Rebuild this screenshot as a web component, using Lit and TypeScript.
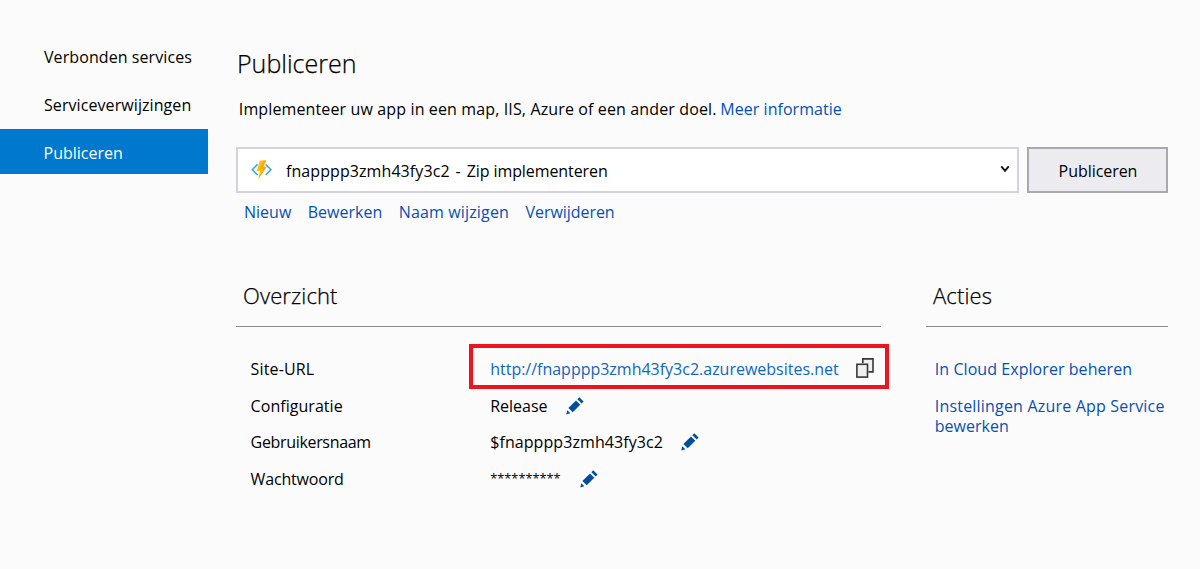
import { LitElement, html, css } from "lit";
import { customElement } from "lit/decorators.js";

const pencil = html`<svg class="pencil" width="18" height="18" viewBox="0 0 18 18" aria-hidden="true">
  <g fill="#004e9c">
    <path d="M13.300.3 17.500 4.500 15.700 6.500 11.400 2.200Z"/>
    <path d="M10 3.500 14.300 7.800 6.700 15.300 2.400 11Z"/>
    <path d="M1.300 13.200 4.300 16.300.3 17.400Z"/>
  </g>
</svg>`;

const copyIcon = html`<svg class="copy" width="18" height="20" viewBox="0 0 18 20" aria-hidden="true">
  <path d="M6.800 5V.9H17v13h-4.600" fill="#f0eff1" stroke="#383838" stroke-width="1.600"/>
  <rect x=".9" y="6.300" width="10.600" height="12.800" fill="#f0eff1" stroke="#383838" stroke-width="1.600"/>
</svg>`;

const functionIcon = html`<svg class="fn" width="22" height="20" viewBox="0 0 22 20" aria-hidden="true">
  <path d="M6.500 4.400 1.300 9.700 6.500 15M14.700 4.400 19.900 9.700 14.700 15" fill="none" stroke="#41a5e0" stroke-width="1.600"/>
  <path d="M8.800.6h6.500L12.200 6.800h3.500L7.200 19.200l1.900-8.200H5.700Z" fill="#fdbd10"/>
  <path d="M12.600.6h2.700L12.200 6.800h3.500L7.200 19.200l4.600-10.200H9Z" fill="#f9a90f"/>
</svg>`;

@customElement("side-nav")
export class SideNav extends LitElement {
  static styles = css`
    :host { display: flex; flex-direction: column; gap: 3px; width: 208px; padding-top: 33px; box-sizing: border-box; }
    .item { height: 45px; line-height: 49px; padding-left: 44px; letter-spacing: 0.080px; white-space: nowrap; }
    .active { background: #0078ce; color: #fff; padding-left: 43.500px; letter-spacing: 0; }
  `;
  render() {
    return html`
      <div class="item">Verbonden services</div>
      <div class="item">Serviceverwijzingen</div>
      <div class="item active">Publiceren</div>
    `;
  }
}

@customElement("profile-picker")
export class ProfilePicker extends LitElement {
  static styles = css`
    :host { display: flex; gap: 8px; height: 46px; }
    .select { flex: none; width: 783px; box-sizing: border-box; border: 2px solid #d3d3e0; background: #fff;
      display: flex; align-items: center; padding: 0 7px 0 13px; white-space: pre; line-height: 22px; }
    .fn { margin-right: 13px; flex: none; }
    .name { letter-spacing: 0.080px; }
    .dash { width: 17px; text-align: center; box-sizing: border-box; }
    .zip { letter-spacing: -0.080px; }
    .chev { margin-left: auto; margin-top: -3px; }
    .text { display: flex; margin-top: 2px; }
    .button { flex: 1; box-sizing: border-box; border: 2px solid #a9a9ab; background: #ececf0;
      font: inherit; color: #000; padding: 1px 0 0 1px; letter-spacing: -0.050px; }
  `;
  render() {
    return html`
      <div class="select">
        ${functionIcon}
        <div class="text"><span class="name">fnapppp3zmh43fy3c2</span><span class="dash">-</span><span class="zip">Zip implementeren</span></div>
        <svg class="chev" width="10" height="8" viewBox="0 0 10 8"><path d="M1.300 1.300 5 5.800 8.700 1.300" fill="none" stroke="#111" stroke-width="1.900"/></svg>
      </div>
      <button class="button">Publiceren</button>
    `;
  }
}

@customElement("app-root")
export class AppRoot extends LitElement {
  static styles = css`
    :host { display: flex; height: 569px; box-sizing: border-box; background: #fbfbfb; color: #000;
      font-family: "Open Sans", "Noto Sans", sans-serif; font-size: 16px; overflow: hidden; }
    side-nav { flex: none; }
    main { width: 932px; margin-left: 28px; }
    h1, h2 { font-weight: 300; margin: 0; -webkit-text-stroke: 0.250px #000; }
    h1 { font-size: 25px; line-height: 34px; padding: 46px 0 0 1px; }
    .intro { line-height: 22px; padding: 18px 0 0 2.800px; letter-spacing: 0.130px; white-space: nowrap; }
    .link { color: #0550b4; text-decoration: none; }
    .intro .link { letter-spacing: 0.040px; margin-left: -0.500px; }
    profile-picker { margin-top: 27px; }
    .commands { display: flex; gap: 16.500px; padding: 8px 0 0 8px; line-height: 22px; white-space: nowrap; }
    .rename { letter-spacing: 0.150px; }
    .delete { letter-spacing: -0.050px; }
    .panels { display: grid; grid-template-columns: 645px 242px; column-gap: 45px; padding-top: 57px; }
    h2 { font-size: 22px; line-height: 30px; padding: 0 0 16px 7px; border-bottom: 1px solid #8c8c8c; letter-spacing: 0.120px; }
    .rows { padding-top: 24px; }
    .row { display: grid; grid-template-columns: 239.600px 1fr; padding-left: 14.600px; height: 36.600px; line-height: 36.600px; white-space: nowrap; }
    .value { display: flex; align-items: center; position: relative; }
    .url { color: #1166bf; letter-spacing: -0.010px; }
    .frame { position: absolute; left: -21.200px; top: -7px; width: 420px; height: 45px; box-sizing: border-box; border: 4px solid #ed1420; pointer-events: none; }
    .pencil { margin-left: 18px; margin-top: 0; }
    .copy { margin-left: 17px; margin-top: -2px; }
    .user { letter-spacing: 0.080px; }
    .mask { font-size: 12.800px; margin-top: -2px; }
    .mask + .pencil { margin-left: 19px; margin-top: -1px; }
    .k-url { letter-spacing: 0.150px; }
    .k-conf { letter-spacing: 0.040px; }
    .k-user { letter-spacing: -0.330px; }
    .k-pass { letter-spacing: -0.180px; }
    .actions { padding: 32px 0 0 8.800px; display: flex; flex-direction: column; gap: 17px; line-height: 20px; white-space: nowrap; }
    .manage { letter-spacing: 0.060px; }
    .settings { letter-spacing: 0.190px; }
    .tail { letter-spacing: 0; }
  `;

  private row(cls: string, label: string, value: unknown) {
    return html`<div class="row"><span class=${cls}>${label}</span><div class="value">${value}</div></div>`;
  }

  render() {
    return html`
      <side-nav></side-nav>
      <main>
        <h1>Publiceren</h1>
        <div class="intro">Implementeer uw app in een map, IIS, Azure of een ander doel. <a class="link">Meer informatie</a></div>
        <profile-picker></profile-picker>
        <nav class="commands">
          <a class="link">Nieuw</a><a class="link">Bewerken</a><a class="link rename">Naam wijzigen</a><a class="link delete">Verwijderen</a>
        </nav>
        <div class="panels">
          <section>
            <h2>Overzicht</h2>
            <div class="rows">
              ${this.row("k-url", "Site-URL", html`<a class="url">http://fnapppp3zmh43fy3c2.azurewebsites.net</a>${copyIcon}<div class="frame"></div>`)}
              ${this.row("k-conf", "Configuratie", html`<span>Release</span>${pencil}`)}
              ${this.row("k-user", "Gebruikersnaam", html`<span class="user">$fnapppp3zmh43fy3c2</span>${pencil}`)}
              ${this.row("k-pass", "Wachtwoord", html`<span class="mask">**********</span>${pencil}`)}
            </div>
          </section>
          <section>
            <h2>Acties</h2>
            <div class="actions">
              <a class="link manage">In Cloud Explorer beheren</a>
              <a class="link settings">Instellingen Azure App Service<br /><span class="tail">bewerken</span></a>
            </div>
          </section>
        </div>
      </main>
    `;
  }
}
